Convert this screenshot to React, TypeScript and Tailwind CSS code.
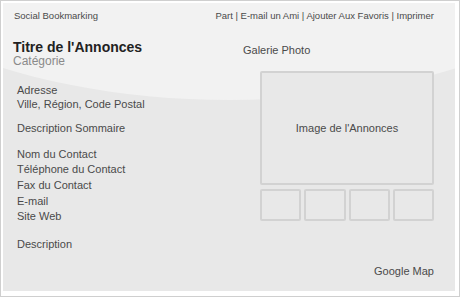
export default function App() {
  const details = ["Nom du Contact", "Téléphone du Contact", "Fax du Contact", "E-mail", "Site Web"];

  return (
    <div
      className="w-[460px] h-[297px] border border-[#cfcfcf] bg-white pl-[2px] pt-[2px] pr-[4px] pb-[5px]"
      style={{ fontFamily: '"Liberation Sans", Arial, sans-serif' }}
    >
      <div className="relative h-full overflow-hidden bg-[#e8e8e8] text-[#4a4a4a]">
        {/* light gloss at the top of the panel */}
        <div className="absolute left-[-191px] top-[-303px] w-[836px] h-[400px] rounded-[50%] bg-[#f2f2f2]" />

        <div className="relative flex h-full flex-col">
          {/* Top bar */}
          <div className="flex h-[26px] items-center justify-between pl-[11px] pr-[21px] text-[9.5px]">
            <span>Social Bookmarking</span>
            <span>Part | E-mail un Ami | Ajouter Aux Favoris | Imprimer</span>
          </div>

          <div className="flex flex-1">
            {/* Left column */}
            <div className="w-[230px] pl-[10px]">
              <div className="mt-[10px]">
                <h1 className="text-[14px] font-bold leading-[16px] text-[#222]">Titre de l'Annonces</h1>
                <p className="text-[12px] leading-[13px] text-[#8a8a8a]">Catégorie</p>
              </div>

              <div className="mt-[15px] pl-[4px] text-[11px] leading-[15.5px]">
                <p>Adresse</p>
                <p className="-mt-[1.5px]">Ville, Région, Code Postal</p>
                <p className="mt-[8.5px]">Description Sommaire</p>
                <div className="mt-[10px]">
                  {details.map((d, i) => (
                    <p key={d} className={i === 3 ? "mt-[0.5px]" : ""}>{d}</p>
                  ))}
                </div>
                <p className="mt-[12px]">Description</p>
              </div>
            </div>

            {/* Right column: gallery */}
            <div className="flex w-[201px] flex-col pl-[10px]">
              <p className="mt-[15px] text-[11px] leading-[13px]">Galerie Photo</p>
              <div className="ml-[17px] mt-[14px] flex h-[114px] items-center justify-center rounded-[2px] border-2 border-[#d2d2d2] bg-[#e8e8e8] text-[11px]">
                Image de l'Annonces
              </div>
              <div className="ml-[17px] mt-[4px] grid grid-cols-4 gap-[3px]">
                {[0, 1, 2, 3].map((i) => (
                  <div key={i} className="h-[32px] rounded-[2px] border-2 border-[#d2d2d2]" />
                ))}
              </div>
              <p className="mt-auto mb-[13px] text-right text-[11px] leading-[13px]">Google Map</p>
            </div>
          </div>
        </div>
      </div>
    </div>
  );
}
